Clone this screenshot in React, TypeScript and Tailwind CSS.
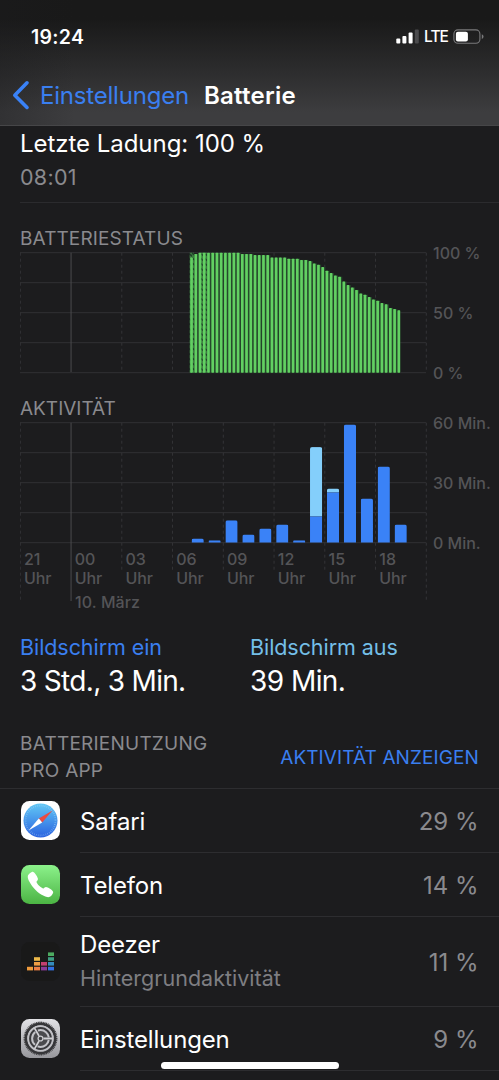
import type { ReactNode } from "react";
import { IoCall } from "react-icons/io5";

const CHART_W = 406;
const CHART_H = 120;
const STEP = 50.75;
const GRID_COLS = [0, 1, 2, 3, 4, 5, 6, 7, 8];
const GRID_ROWS = [0, 30, 60, 90, 120];

const LEVELS = [
  96, 99, 100, 100, 100, 100, 100, 100, 100, 100, 100, 100, 99, 99, 99, 98, 98, 98, 98, 96,
  96, 96, 96, 95, 95, 95, 94, 94, 93, 91, 90, 88, 85, 83, 81, 80, 76, 73, 71, 69,
  66, 65, 63, 61, 60, 58, 57, 54, 53, 52,
];

// minutes per hour, starting at 07:00
const ACTIVITY = [
  { on: 2, off: 0 },
  { on: 1.1, off: 0 },
  { on: 11.1, off: 0 },
  { on: 4, off: 0 },
  { on: 7, off: 0 },
  { on: 9, off: 0 },
  { on: 1.1, off: 0 },
  { on: 13, off: 34.7 },
  { on: 25, off: 2 },
  { on: 59, off: 0 },
  { on: 22, off: 0 },
  { on: 38, off: 0 },
  { on: 9, off: 0 },
];

const HOURS = ["21", "00", "03", "06", "09", "12", "15", "18"];

function StatusBar() {
  return (
    <div className="flex h-[64px] items-start justify-between pl-[31px] pr-[15px] pt-[22px]">
      <span className="text-[19.5px] font-semibold leading-[30px] tracking-[0.3px] text-white">19:24</span>
      <div className="flex h-[29px] items-center">
        <svg width="24" height="16" viewBox="0 0 24 16">
          <rect x="0.3" y="9.5" width="4" height="5" rx="1" fill="#fff" />
          <rect x="6.4" y="7" width="4" height="7.5" rx="1" fill="#fff" />
          <rect x="12.6" y="3.5" width="4" height="11" rx="1" fill="#fff" />
          <rect x="18.8" y="0.5" width="4" height="14" rx="1" fill="#4b4b4d" />
        </svg>
        <span className="ml-1 w-[29px] text-[15.5px] font-medium leading-4 tracking-[-0.9px] text-white">LTE</span>
        <svg width="31" height="16" viewBox="0 0 31 16">
          <rect x="0.9" y="0.9" width="26" height="13.4" rx="4" fill="none" stroke="#79797b" strokeWidth="1.1" />
          <rect x="2.9" y="2.7" width="12" height="9.8" rx="2" fill="#fff" />
          <path d="M28.8 5.2c1.1.4 1.7 1.3 1.7 2.4s-.6 2-1.7 2.4z" fill="#79797b" />
        </svg>
      </div>
    </div>
  );
}

function Header() {
  return (
    <header className="h-[126px] shrink-0 border-b border-[#464648] bg-linear-to-b from-[#191919] from-15% to-[#3d3d3f] to-90%">
      <div className="h-[125px] bg-linear-to-r from-[#1c1c1e]/35 via-transparent via-15% to-transparent">
        <StatusBar />
        <div className="flex h-[62px] items-center pl-[12px]">
          <svg width="18" height="30" viewBox="0 0 18 30">
            <path d="M15 2.8L2.8 15.2L15 27.4" fill="none" stroke="#3a82f7" strokeWidth="3.6" strokeLinecap="round" strokeLinejoin="round" />
          </svg>
          <span className="ml-[10px] w-[164px] pt-px text-[24px] leading-[31px] tracking-[-0.2px] text-[#3a7ff0]">Einstellungen</span>
          <span className="pt-px text-[24px] font-semibold leading-[31px] tracking-[0.25px] text-white">Batterie</span>
        </div>
      </div>
    </header>
  );
}

function Grid({ tail = false }: { tail?: boolean }) {
  return (
    <g>
      {GRID_ROWS.map((y) => (
        <line key={y} x1="0" x2={CHART_W} y1={y + 0.7} y2={y + 0.7} stroke="#313134" />
      ))}
      {GRID_COLS.map((i) => {
        const end = !tail ? CHART_H : i === 0 || i === 1 || i === 8 ? 179 : 150;
        return (
          <line
            key={i}
            x1={i * STEP + 0.3}
            x2={i * STEP + 0.3}
            y1="0.7"
            y2={end}
            stroke={i === 1 ? "#4b4b4e" : "#343437"}
            strokeDasharray={i === 1 ? undefined : "3 3"}
          />
        );
      })}
    </g>
  );
}

function AxisLabels({ labels }: { labels: string[] }) {
  return (
    <div className="-mt-[9px] ml-[6px] flex flex-col whitespace-nowrap text-[16px] font-medium leading-[20px] text-[#545457]">
      {labels.map((l) => (
        <span key={l} className="h-[60px] shrink-0">
          {l}
        </span>
      ))}
    </div>
  );
}

function BatteryChart() {
  return (
    <div className="flex h-[122px]">
      <svg width="407" height="122" viewBox="0 0 407 122" className="shrink-0">
        <defs>
          <pattern id="hatch" width="4" height="5" patternUnits="userSpaceOnUse">
            <rect width="4" height="5" fill="#3b7a40" />
            <path d="M0 0L4 3V5L0 2z" fill="#20402a" />
          </pattern>
        </defs>
        <Grid />
        {LEVELS.map((v, i) => {
          const h = v * 1.2;
          return (
            <rect key={i} x={170 + i * 4.23} y={120.7 - h} width={i === 49 ? 3 : 4.23} height={h} fill="#25492c" />
          );
        })}
        <rect x="169.6" y="0.7" width="4.4" height="120" fill="url(#hatch)" />
        <rect x="173" y="2" width="1.3" height="118.7" fill="url(#hatch)" />
        <rect x="181" y="0.7" width="6" height="120" fill="url(#hatch)" />
        {LEVELS.map((v, i) => {
          const h = v * 1.2;
          return <rect key={i} x={170.2 + i * 4.23} y={120.7 - h} width="2.7" height={h} rx="0.6" fill="#62d062" />;
        })}
      </svg>
      <AxisLabels labels={["100 %", "50 %", "0 %"]} />
    </div>
  );
}

function ActivityChart() {
  return (
    <div className="flex h-[190px]">
      {/* hour labels share the svg's box so the dashed lines can run down between them */}
      <div className="relative w-[407px] shrink-0">
        <svg width="407" height="182" viewBox="0 0 407 182">
          <defs>
            <clipPath id="bars">
              {ACTIVITY.map((a, i) => {
                const h = (a.on + a.off) * 2;
                return <rect key={i} x={171.6 + i * 16.917} y={120.5 - h} width="12.2" height={h + 3} rx={Math.min(2, h / 2)} />;
              })}
            </clipPath>
          </defs>
          <Grid tail />
          <g clipPath="url(#bars)">
            {ACTIVITY.map((a, i) => (
              <g key={i}>
                <rect x={171.6 + i * 16.917} y={120.5 - (a.on + a.off) * 2} width="12.2" height={a.off * 2} fill="#84cffb" />
                <rect x={171.6 + i * 16.917} y={120.5 - a.on * 2} width="12.2" height={a.on * 2} fill="#3a82f7" />
              </g>
            ))}
          </g>
        </svg>
        <div className="absolute left-0 top-[128px] text-[16px] font-medium leading-[19px] text-[#545457]">
          <div className="flex">
            {HOURS.map((h) => (
              <div key={h} className="w-[50.75px] pl-[4px]">
                <div>{h}</div>
                <div className="tracking-[-0.1px]">Uhr</div>
              </div>
            ))}
          </div>
          <div className="mt-[5px] pl-[55px] tracking-[0.1px]">10. März</div>
        </div>
      </div>
      <AxisLabels labels={["60 Min.", "30 Min.", "0 Min."]} />
    </div>
  );
}

function SafariIcon() {
  return (
    <svg width="39" height="39" viewBox="0 0 39 39">
      <defs>
        <linearGradient id="safari" x1="0" y1="0" x2="0" y2="1">
          <stop offset="0" stopColor="#62c8f5" />
          <stop offset="1" stopColor="#2a62e0" />
        </linearGradient>
      </defs>
      <rect width="39" height="39" rx="8.5" fill="#fff" />
      <circle cx="19.5" cy="19.5" r="17" fill="url(#safari)" />
      <circle cx="19.5" cy="19.5" r="15" fill="none" stroke="#b9e0fa" strokeOpacity=".5" strokeWidth="1.8" strokeDasharray=".6 1.36" />
      <path d="M31.5 9.5L21.2 21.4L17.8 17.4z" fill="#ec4b40" />
      <path d="M7.5 29.5L17.8 17.4L21.2 21.4z" fill="#fff" />
    </svg>
  );
}

function PhoneIcon() {
  return (
    <div className="flex h-[39px] w-[39px] items-center justify-center rounded-[8.5px] bg-linear-to-b from-[#8cf28b] to-[#4bb443]">
      <IoCall size={29} color="#fff" />
    </div>
  );
}

function DeezerIcon() {
  const cells = [
    [0, 3, "#ee9a3c"],
    [1, 3, "#ee7f45"],
    [1, 2, "#ef9e45"],
    [1, 1, "#edb949"],
    [2, 3, "#8a3a98"],
    [2, 2, "#c33f70"],
    [3, 3, "#3270e2"],
    [3, 2, "#348bbb"],
    [3, 1, "#3f9d82"],
    [3, 0, "#4dab60"],
  ] as const;
  return (
    <svg width="39" height="39" viewBox="0 0 39 39">
      <rect width="39" height="39" rx="8.5" fill="#191919" />
      {cells.map(([c, r, fill]) => (
        <rect key={`${c}-${r}`} x={6 + c * 7} y={10.4 + r * 4.8} width="6" height="3.6" fill={fill} />
      ))}
    </svg>
  );
}

function SettingsIcon() {
  return (
    <svg width="39" height="39" viewBox="0 0 39 39">
      <defs>
        <linearGradient id="settings" x1="0" y1="0" x2="0" y2="1">
          <stop offset="0" stopColor="#e2e2e6" />
          <stop offset="1" stopColor="#97979c" />
        </linearGradient>
      </defs>
      <rect width="39" height="39" rx="8.5" fill="url(#settings)" />
      <g transform="translate(19.5 19.5)" fill="none">
        <circle r="16.2" stroke="#414144" strokeWidth="1.5" strokeDasharray="1 .7" />
        <circle r="14.6" stroke="#363639" strokeWidth="2.6" />
        <circle r="12.2" fill="#3a3a3d" stroke="#c2c2c7" strokeWidth="1.6" />
        <circle r="8.4" fill="#4a4a4d" stroke="#c2c2c7" strokeWidth="2" strokeDasharray="14.6 3" strokeDashoffset="-1.5" />
        <path d="M3 0H12M-1.5 2.6L-6 10.4M-1.5 -2.6L-6 -10.4" stroke="#d0d0d4" strokeWidth="1.8" />
        <circle r="2.4" fill="#404043" stroke="#d0d0d4" strokeWidth="1.3" />
      </g>
    </svg>
  );
}

interface AppRowProps {
  icon: ReactNode;
  name: string;
  note?: string;
  percent: string;
}

function AppRow({ icon, name, note, percent }: AppRowProps) {
  return (
    <div className={`flex shrink-0 pl-[21px] ${note ? "h-[90px]" : "h-[64px]"}`}>
      <div className="flex w-[59px] items-center pb-[2px]">{icon}</div>
      <div className="flex flex-1 items-center justify-between border-b border-[#2d2d30] pr-[20.5px]">
        <div className={note ? "" : "pt-[2px]"}>
          <div className="text-[24px] leading-[34px] tracking-[-0.15px] text-white">{name}</div>
          {note && <div className="-mt-px text-[21.5px] leading-[34px] tracking-[0.02px] text-[#7e7e82]">{note}</div>}
        </div>
        <div className="pt-[2px] text-[24px] leading-[34px] text-[#8a8a8e]">{percent}</div>
      </div>
    </div>
  );
}

export default function App() {
  return (
    <div className="relative flex h-[1080px] w-[499px] flex-col overflow-hidden bg-[#1c1c1e] font-['Inter',sans-serif]">
      <Header />

      <div className="ml-[20px] h-[77px] shrink-0 border-b border-[#2b2b2e]">
        <div className="pt-[2px] text-[24px] leading-[32px] tracking-[-0.04px] text-white">Letzte Ladung: 100 %</div>
        <div className="text-[21.5px] leading-[34px] tracking-[0.3px] text-[#8a8a8e]">08:01</div>
      </div>

      <section className="shrink-0 pl-[20px]">
        <h2 className="mt-[23px] h-[26px] text-[19px] leading-[26px] tracking-[0.1px] text-[#8a8a8e]">BATTERIESTATUS</h2>
        <BatteryChart />
        <h2 className="mt-[22px] h-[26px] text-[19px] leading-[26px] text-[#8a8a8e]">AKTIVITÄT</h2>
        <ActivityChart />
      </section>

      <section className="mt-[20px] flex h-[68px] shrink-0 pl-[20px]">
        <div className="w-[230px]">
          <div className="text-[21.5px] leading-[30px] tracking-[-0.07px] text-[#3a7ff0]">Bildschirm ein</div>
          <div className="text-[28px] leading-[38px] tracking-[-0.68px] text-white">3 Std., 3 Min.</div>
        </div>
        <div>
          <div className="text-[21.5px] leading-[30px] tracking-[-0.07px] text-[#74bfe8]">Bildschirm aus</div>
          <div className="text-[28px] leading-[38px] tracking-[-0.55px] text-white">39 Min.</div>
        </div>
      </section>

      <div className="flex h-[89px] shrink-0 items-end justify-between border-b border-[#2d2d30] pl-[20px] pr-[20px]">
        <h2 className="mb-[4px] text-[19px] leading-[26.5px] tracking-[0.23px] text-[#8a8a8e]">
          BATTERIENUTZUNG
          <br />
          PRO APP
        </h2>
        <span className="mb-[17px] text-[19px] leading-[27px] tracking-[0.1px] text-[#3a7ff0]">AKTIVITÄT ANZEIGEN</span>
      </div>

      <AppRow icon={<SafariIcon />} name="Safari" percent="29 %" />
      <AppRow icon={<PhoneIcon />} name="Telefon" percent="14 %" />
      <AppRow icon={<DeezerIcon />} name="Deezer" note="Hintergrundaktivität" percent="11 %" />
      <AppRow icon={<SettingsIcon />} name="Einstellungen" percent="9 %" />

      <div className="absolute bottom-[11px] left-[161px] h-[7px] w-[178px] rounded-full bg-white" />
    </div>
  );
}
